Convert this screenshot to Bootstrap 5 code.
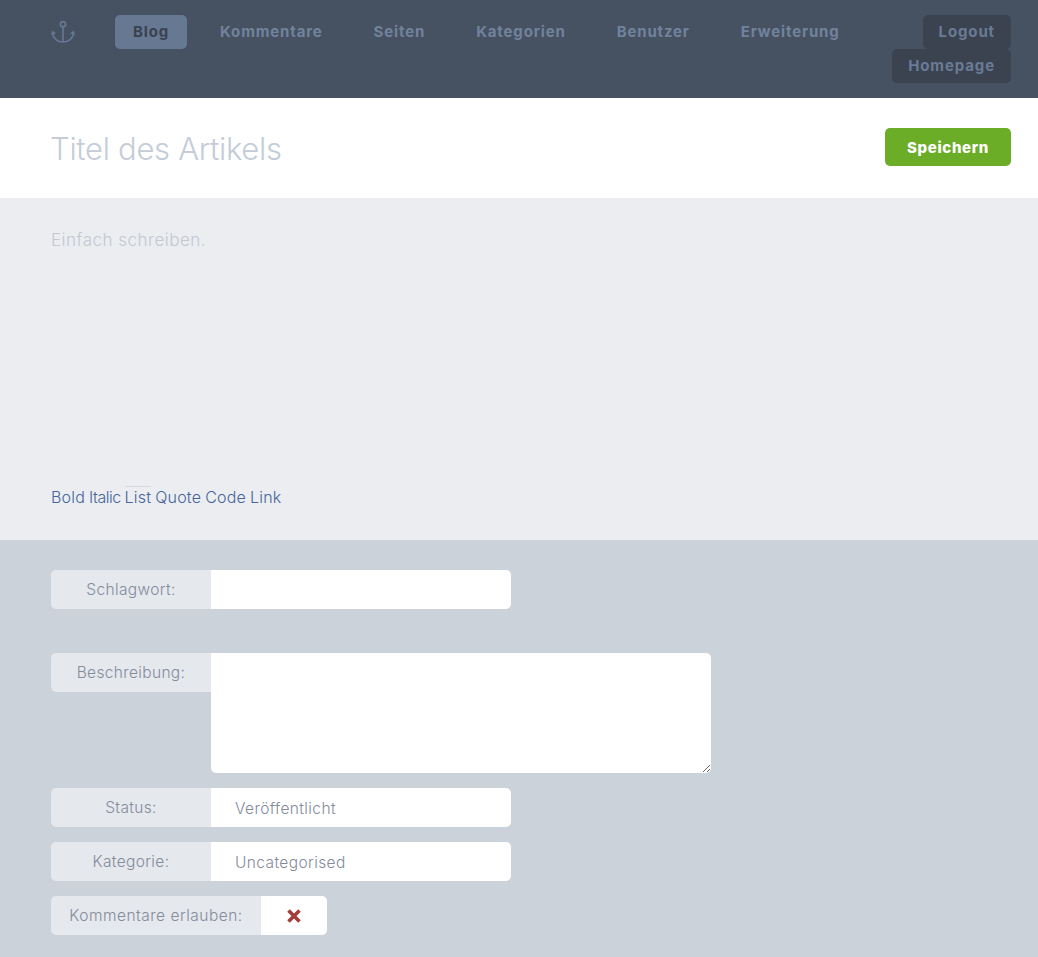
<!DOCTYPE html>
<html lang="de">
<head>
<meta charset="utf-8">
<title>Neuer Artikel</title>
<link href="https://cdn.jsdelivr.net/npm/bootstrap@5.3.0/dist/css/bootstrap.min.css" rel="stylesheet">
<style>
body{font-family:"Inter","Liberation Sans",sans-serif;font-weight:300;background:#cbd2da;color:#848b9c;font-size:15px;min-height:957px}
a{text-decoration:none}
.top-bar{background:#465162;height:98px;padding:15px 27px 0 51px}
.brand-mark{width:26px;height:26px;margin:4px 39px 0 -1px;flex:none}
.main-nav{gap:15px}
.main-nav .nav-link{height:34px;padding:0 18px;line-height:34px;border-radius:5px;font-weight:700;font-size:15px;color:#72829c;letter-spacing:.85px;font-family:"Inter","Liberation Sans",sans-serif}
.main-nav .nav-link.active{background:#667892;color:#3a4150}
.side-links{width:125px}
.side-btn{height:34px;padding:0 16px;line-height:34px;border-radius:5px;font-weight:700;font-size:15px;background:#3b4250;color:#6a7b95;letter-spacing:.88px}
.title-bar{background:#fff;height:100px;padding:30px 27px 0 51px}
.title-text{font-size:31px;font-weight:300;color:#c4ccd8;letter-spacing:-.3px;line-height:40px;margin:0 0 0 -1px;padding-top:1px}
.save-btn{width:126px;height:38px;line-height:40px;padding:0;border:0;border-radius:5px;background:#6cad28;color:#fff;font-weight:800;font-size:15px;letter-spacing:.65px}
.save-btn:hover{background:#6cad28;color:#fff}
.editor-pane{background:#ebedf1;height:342px;padding:30px 51px 0}
.editor-hint{font-size:17px;color:#c3c8d2;line-height:24px;margin:0;height:259px;letter-spacing:.5px}
.tool-row{gap:4px;font-size:16px;line-height:20px}
.tool-row a{color:#46659a;letter-spacing:.2px}
.tool-row a.tool-tight{letter-spacing:-.5px}
.tool-row a.tool-on{border-top:1px solid #d4d8df;margin-top:-1px}
.meta-pane{padding:30px 51px 0}
.meta-row{height:39px;width:460px;margin-bottom:15px;flex-wrap:nowrap}
.meta-row.top-gap{margin-bottom:44px}
.meta-row .input-group-text,.area-label{background:#e5e8ed;border:0;color:#848b9c;width:160px;justify-content:center;font-size:15.5px;font-weight:300;height:39px;padding:0;border-radius:5px 0 0 5px;letter-spacing:.35px}
.meta-row .form-control,.meta-row .form-select{border:0;height:39px;border-radius:0 5px 5px 0!important;font-size:15.5px;font-weight:300;color:#848b9c;padding:3px 24px 0;background-image:none;margin-left:0!important;box-shadow:none;letter-spacing:.4px}
.area-row{margin-bottom:15px}
.area-label{display:flex;align-items:center;flex:none}
.area-field{width:500px;height:120px;border:0;border-radius:0 5px 5px 5px;display:block}
.toggle-row{width:276px}
.toggle-row .input-group-text{width:210px;letter-spacing:.5px}
.toggle-row .toggle-cell{margin-left:0!important;width:66px;background:#fff;border-radius:0 5px 5px 0!important;height:39px}
</style>
</head>
<body>
<header class="top-bar d-flex justify-content-between">
  <div class="d-flex align-items-start">
    <svg class="brand-mark" viewBox="0 0 26 26" fill="none" stroke="#667892" stroke-width="1.6"><circle cx="13" cy="5.2" r="2.6"/><path d="M13 8v15"/><path d="M2.5 14c.5 5.500 5 9 10.500 9s10-3.500 10.500-9" /><path d="M1 16l1.300-4.500 3.700 3zM25 16l-1.300-4.500-3.700 3z" fill="#667892" stroke="none"/></svg>
    <nav class="nav main-nav">
      <a class="nav-link active" href="#">Blog</a>
      <a class="nav-link" href="#">Kommentare</a>
      <a class="nav-link" href="#">Seiten</a>
      <a class="nav-link" href="#">Kategorien</a>
      <a class="nav-link" href="#">Benutzer</a>
      <a class="nav-link" href="#">Erweiterung</a>
    </nav>
  </div>
  <div class="d-flex flex-column align-items-end side-links">
    <a class="side-btn" href="#">Logout</a>
    <a class="side-btn" href="#">Homepage</a>
  </div>
</header>
<section class="title-bar d-flex justify-content-between align-items-start">
  <h1 class="title-text">Titel des Artikels</h1>
  <button class="btn save-btn" type="button">Speichern</button>
</section>
<section class="editor-pane">
  <p class="editor-hint">Einfach schreiben.</p>
  <div class="d-flex tool-row">
    <a href="#">Bold</a><a class="tool-tight" href="#">Italic</a><a class="tool-on" href="#">List</a><a href="#">Quote</a><a href="#">Code</a><a href="#">Link</a>
  </div>
</section>
<section class="meta-pane">
  <div class="input-group meta-row top-gap">
    <span class="input-group-text">Schlagwort:</span>
    <input class="form-control" type="text" aria-label="Schlagwort">
  </div>
  <div class="d-flex area-row">
    <label class="area-label">Beschreibung:</label>
    <textarea class="area-field" aria-label="Beschreibung"></textarea>
  </div>
  <div class="input-group meta-row">
    <span class="input-group-text">Status:</span>
    <select class="form-select" aria-label="Status"><option>Veröffentlicht</option></select>
  </div>
  <div class="input-group meta-row">
    <span class="input-group-text">Kategorie:</span>
    <select class="form-select" aria-label="Kategorie"><option>Uncategorised</option></select>
  </div>
  <div class="d-flex meta-row toggle-row input-group">
    <span class="input-group-text">Kommentare erlauben:</span>
    <div class="toggle-cell d-flex align-items-center justify-content-center">
      <svg width="14" height="14" viewBox="0 0 14 14" stroke="#a53c3c" stroke-width="3.600"><path d="M1.500 1.500l11 11M12.500 1.500l-11 11"/></svg>
    </div>
  </div>
</section>
<script src="https://cdn.jsdelivr.net/npm/bootstrap@5.3.0/dist/js/bootstrap.bundle.min.js"></script>
</body>
</html>
